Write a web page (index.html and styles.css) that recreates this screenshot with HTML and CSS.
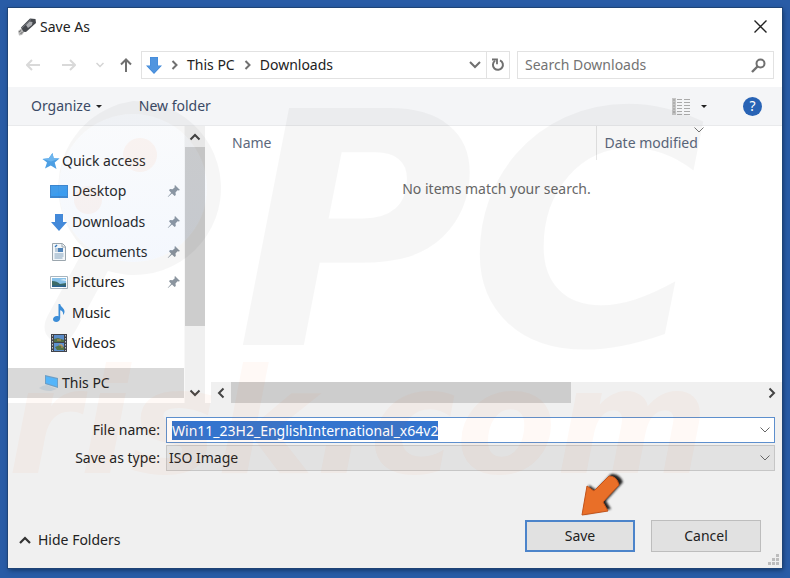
FILE: index.html
```html
<!DOCTYPE html>
<html lang="en">
<head>
<meta charset="utf-8">
<title>Save As</title>
<link rel="stylesheet" href="styles.css">
</head>
<body>
<svg class="symbols" aria-hidden="true">
  <symbol id="pin" viewBox="0 0 14 14"><path d="M8 1l5 5-1.500.500-1-.200L8.500 8.500l.300 2.500-1.200 1L5 9.500 1 13l-.300-.300L4.200 8.700 2 6.300l1-1.200 2.600.200L7.800 3.300 7.500 2z" fill="#8b959f"/></symbol>
  <symbol id="down" viewBox="0 0 16 17"><path d="M4 0h8v8.500h4L8 17 0 8.500h4z" fill="#3f87d8"/><path d="M4.500.500h7V9h3.300L8 16 1.200 9h3.300z" fill="#5095df"/></symbol>
  <symbol id="chev-down" viewBox="0 0 12 12"><path d="M1.500 3.500L6 8l4.500-4.500" fill="none" stroke="currentColor"/></symbol>
</svg>
<main class="window" aria-label="Save As">
  <header class="title">
    <svg class="usb" viewBox="0 0 20 18"><path d="M1 13l4-3 3 3-3 4-3 .500z" fill="#b8b8b8"/><path d="M2 14l2-1.500M3.500 16l2-2" stroke="#666"/><path d="M4 9.500L13 .500 18.500 1l.500 4-10 9-2.500-.200z" fill="#45484d"/><path d="M9 7l3.500-3.500 3 .500-.500 3L11 10z" fill="#aaacb0"/><path d="M5 10l9-8.500" stroke="#777b82"/></svg>
    <h1>Save As</h1>
    <button class="close" aria-label="Close"><svg viewBox="0 0 13 13"><path d="M.500.500l12 12m0-12l-12 12" stroke="#222" stroke-width="1.400"/></svg></button>
  </header>

  <div class="location">
    <div class="history">
      <button class="back" aria-label="Back" disabled><svg viewBox="0 0 14 12"><path d="M6 1L1 6l5 5M1 6h13" fill="none" stroke="#d9d9d9" stroke-width="2"/></svg></button>
      <button class="forward" aria-label="Forward" disabled><svg viewBox="0 0 14 12"><path d="M8 1l5 5-5 5M13 6H0" fill="none" stroke="#d9d9d9" stroke-width="2"/></svg></button>
      <button class="recent" aria-label="Recent locations" disabled><svg viewBox="0 0 8 6"><path d="M.500 1L4 4.500 7.500 1" fill="none" stroke="#d4d4d4" stroke-width="1.500"/></svg></button>
      <button class="up" aria-label="Up"><svg viewBox="0 0 12 14"><path d="M1 6.500L6 1.500l5 5M6 2v12" fill="none" stroke="#707070" stroke-width="2"/></svg></button>
    </div>
    <nav class="address" aria-label="Address">
      <svg class="folder"><use href="#down"/></svg>
      <svg class="sep" viewBox="0 0 7 10"><path d="M1.500 1l4 4-4 4" fill="none" stroke="#707070" stroke-width="2"/></svg>
      <a href="#pc">This PC</a>
      <svg class="sep" viewBox="0 0 7 10"><path d="M1.500 1l4 4-4 4" fill="none" stroke="#707070" stroke-width="2"/></svg>
      <a href="#downloads">Downloads</a>
      <button class="previous" aria-label="Previous locations"><svg viewBox="0 0 12 8"><path d="M1 1l5 5 5-5" fill="none" stroke="#707070" stroke-width="2"/></svg></button>
      <button class="refresh" aria-label="Refresh"><svg viewBox="0 0 14 14"><path d="M9 2.300a5 5 0 1 1-5 .500" fill="none" stroke="#707070" stroke-width="2"/><path d="M1 1.500h5v4.700" fill="none" stroke="#707070" stroke-width="1.800"/></svg></button>
    </nav>
    <label class="search"><input type="search" placeholder="Search Downloads" aria-label="Search Downloads"><svg viewBox="0 0 15 15"><circle cx="9.500" cy="5.500" r="4" fill="none" stroke="#707070" stroke-width="2"/><path d="M6.500 8.500L1 14" stroke="#707070" stroke-width="2.400"/></svg></label>
  </div>

  <div class="toolbar">
    <button class="organize">Organize <span class="caret"></span></button>
    <button>New folder</button>
    <button class="view" aria-label="Change view"><svg viewBox="0 0 18 17"><path d="M0 0h4v17H0z" fill="#c6c6c6"/><path d="M1 2h2M1 5h2M1 8h2M1 11h2M1 14h2" stroke="#999"/><path d="M5 1.500h5m2 0h6M5 4.500h5m2 0h6M5 7.500h5m2 0h6M5 10.500h5m2 0h6M5 13.500h5m2 0h6M5 16.500h5m2 0h6" stroke="#aaa"/></svg><span class="caret"></span></button>
    <button class="help" aria-label="Help">?</button>
  </div>

  <section class="browser">
    <nav class="tree" aria-label="Folders">
      <ul>
        <li class="root"><svg viewBox="0 0 18 18"><path d="M10.500 1l1.200 5.200 5.800.300-4.800 4L14.500 17l-5.700-3.500L3 16.500l2-6L.500 7l6.300-.700z" fill="#4d9fe3"/><path d="M10.500 1l1.200 5.200 5.800.300-8.500 3L.500 7l6.300-.700z" fill="#6db5ee"/></svg><a href="#quick">Quick access</a></li>
        <li><svg viewBox="0 0 18 18"><path d="M0 3h18v13H0z" fill="#3b86cf"/><path d="M1 4h16v10H1z" fill="#419cea"/><path d="M1 14L17 6v8z" fill="#389cf0"/></svg><a href="#desktop">Desktop</a><svg class="pin"><use href="#pin"/></svg></li>
        <li><svg viewBox="0 0 18 18"><path d="M5 1h8v8h4l-8 9-8-9h4z" fill="#4389d9"/></svg><a href="#downloads">Downloads</a><svg class="pin"><use href="#pin"/></svg></li>
        <li><svg viewBox="0 0 18 18"><path d="M2.500.500h10l3 3v14h-13z" fill="#f2f6f9" stroke="#9ba6ae"/><path d="M12 1v3h3" fill="none" stroke="#9ba6ae"/><path d="M5 6h3M5 8h3M4.500 11h9M4.500 13h9M4.500 15h8" stroke="#84a3bd"/><path d="M8 5h5v4H8z" fill="#4f83b9"/><path d="M5 4l2-2" stroke="#347abe" stroke-width="1.500"/></svg><a href="#documents">Documents</a><svg class="pin"><use href="#pin"/></svg></li>
        <li><svg viewBox="0 0 18 18"><path d="M.500 3.500h17v12H.500z" fill="#fff" stroke="#a8b5be"/><path d="M2 5h14v9H2z" fill="#88c1e9"/><path d="M2 8q5 0 8 3l6-1v4H2z" fill="#3c6b68"/><path d="M2 12.500h14V14H2z" fill="#286292"/><path d="M10 7l4-1 2 1v1z" fill="#dbedf6"/></svg><a href="#pictures">Pictures</a><svg class="pin"><use href="#pin"/></svg></li>
        <li><svg viewBox="0 0 18 18"><path d="M8.500 0h1.700c.300 3 4.300 4 4.300 7.500 0 1.500-.600 2.800-1.500 3.500.600-3-.800-4-2.800-4.700V14c0 5-7.200 5-7.200 1.200 0-2.400 3-4 5.500-2.900z" fill="#3f93df"/></svg><a href="#music">Music</a></li>
        <li><svg viewBox="0 0 18 18"><path d="M1 0h16v18H1z" fill="#42454c"/><path d="M4 1h10v7H4zM4 9h10v8H4z" fill="#5e92d0"/><path d="M4 5l4-1 6 2v2H4zM5 13l5-2 4 2v3H7z" fill="#547448"/><path d="M7 6h4M9 11h3v3" stroke="#d39853" fill="none"/><path d="M2.500 1v16m13-16v16" stroke="#c6c9ce" stroke-dasharray="1.500 1.500"/></svg><a href="#videos">Videos</a></li>
      </ul>
      <div class="root selected"><svg viewBox="0 0 18 18"><path d="M-3 14q4-3 8-3l10 4-6 2q-8 0-12-3z" fill="#c3ccd3"/><path d="M3 1l13 3v10L3 10z" fill="#6d9fc6"/><path d="M4 2.500l11 2.500v7.500L4 9z" fill="#54b5fa"/></svg><a href="#pc">This PC</a></div>
    </nav>
    <div class="vbar">
      <button aria-label="Scroll up"><svg class="flip"><use href="#chev-down"/></svg></button>
      <div class="track"><div class="thumb"></div></div>
      <button aria-label="Scroll down"><svg><use href="#chev-down"/></svg></button>
    </div>
    <div class="files">
      <table>
        <thead><tr><th>Name</th><th class="date">Date modified<svg class="sort"><use href="#chev-down"/></svg></th></tr></thead>
        <tbody><tr><td colspan="2">No items match your search.</td></tr></tbody>
      </table>
      <div class="hbar">
        <button aria-label="Scroll left"><svg class="left"><use href="#chev-down"/></svg></button>
        <div class="track"><div class="thumb"></div></div>
        <button aria-label="Scroll right"><svg class="right"><use href="#chev-down"/></svg></button>
      </div>
    </div>
  </section>

  <form class="details">
    <label for="name">File name:</label>
    <div class="field"><input id="name" type="text" value="Win11_23H2_EnglishInternational_x64v2" spellcheck="false"><svg><use href="#chev-down"/></svg></div>
    <label for="type">Save as type:</label>
    <div class="field"><select id="type"><option>ISO Image</option></select><svg><use href="#chev-down"/></svg></div>
  </form>

  <footer>
    <button class="hide"><svg viewBox="0 0 12 8"><path d="M1 7l5-5 5 5" fill="none" stroke="#333" stroke-width="2.200"/></svg>Hide Folders</button>
    <div class="save-wrap">
      <button class="action save">Save</button>
      <svg class="pointer" viewBox="0 0 48 50" aria-hidden="true">
        <defs><filter id="soft" x="-20%" y="-20%" width="140%" height="140%"><feGaussianBlur stdDeviation="1"/></filter></defs>
        <path d="M4 43L9 14l7 5L31 3q8-1 12 8L26 30l5 8z" fill="#222" transform="translate(2 -1)" filter="url(#soft)"/>
        <path d="M4 43L9 14l7 5L31 4q8 0 10 9L25 30l5 9z" fill="#e96f28" stroke="#c3541b" stroke-linejoin="round"/>
      </svg>
    </div>
    <button class="action">Cancel</button>
    <svg class="grip" viewBox="0 0 11 11" aria-hidden="true"><path d="M8 0h3v3H8zM4 4h3v3H4zM8 4h3v3H8zM0 8h3v3H0zM4 8h3v3H4zM8 8h3v3H8z" fill="#bdbdbd"/></svg>
  </footer>
</main>

<svg class="watermark" viewBox="0 0 790 578" aria-hidden="true">
  <defs><linearGradient id="lens" x2="0" y2="1"><stop stop-color="#8fa8c8" stop-opacity=".05"/><stop offset="1" stop-color="#5d91e8" stop-opacity=".07"/></linearGradient></defs>
  <circle cx="133" cy="188" r="74" fill="url(#lens)"/>
  <path d="M133 101a87 87 0 1 1-25 170l-31 57q-12 23-27 11-10-9-2-24l36-66A87 87 0 0 1 133 101zm0 13a74 74 0 1 0 0 148 74 74 0 0 0 0-148z" class="grey" fill-rule="evenodd"/>
  <circle cx="140" cy="155" r="17" class="spot"/>
  <circle cx="88" cy="200" r="14" class="spot"/>
  <text x="236" y="345" class="grey big">P</text>
  <text x="468" y="345" class="grey big">C</text>
  <text x="8" y="473" class="orange small">risk.com</text>
</svg>
<script src="dialog.js"></script>
</body>
</html>
```
FILE: styles.css
```css
* { box-sizing: border-box; }
body {
  margin: 0;
  min-height: 100vh;
  padding: 8px 8px 10px;
  display: flex;
  background: #295ca6;
  font: 14px/20px "Noto Sans", "Open Sans", sans-serif;
  color: #222;
}
button, input, select { font: inherit; color: inherit; }
button { border: 0; padding: 0; background: none; display: flex; align-items: center; }
a { color: inherit; text-decoration: none; }
svg { display: block; flex: none; }
.symbols { position: absolute; width: 0; height: 0; }
.window {
  flex: 1;
  display: flex;
  flex-direction: column;
  background: #fff;
  box-shadow: 0 0 0 1px #1e4477, 1px 2px 5px #12335f;
}

.title { display: flex; align-items: center; gap: 3px; height: 37px; padding: 0 15px 0 9px; }
.title h1 { margin: 0; font-size: 14px; font-weight: 400; flex: 1; }
.usb { width: 20px; height: 18px; }
.close svg { width: 13px; height: 13px; }

.location { display: flex; padding: 6px 8px 8px 17px; height: 42px; }
.history { display: flex; align-items: center; width: 116px; padding-left: 1px; }
.back svg, .forward svg { width: 14px; height: 12px; }
.forward { margin-left: 22px; }
.recent { margin-left: 20px; }
.recent svg { width: 8px; height: 6px; }
.up { margin-left: 16px; }
.up svg { width: 12px; height: 14px; }
.address { flex: 1; display: flex; align-items: center; border: 1px solid #e2e2e2; padding-left: 4px; }
.folder { width: 16px; height: 17px; }
.sep { width: 7px; height: 10px; margin: 0 9px; }
.previous { margin-left: auto; padding-right: 5px; }
.previous svg { width: 12px; height: 8px; }
.refresh { align-self: stretch; width: 23px; justify-content: center; border-left: 1px solid #e2e2e2; }
.refresh svg { width: 14px; height: 14px; }
.search { width: 257px; margin-left: 7px; display: flex; align-items: center; border: 1px solid #e2e2e2; padding: 0 7px; }
.search input { flex: 1; min-width: 0; border: 0; padding: 0; outline: 0; background: none; }
.search input::placeholder { color: #737373; opacity: 1; }
.search svg { width: 15px; height: 15px; }

.toolbar { display: flex; align-items: center; height: 39px; padding: 0 20px 0 23px; background: #f4f5f7; border-bottom: 1px solid #e9eaec; color: #3b4a66; }
.organize { margin-right: 37px; gap: 5px; }
.caret { border: 3px solid transparent; border-top-color: #222; border-bottom: 0; }
.view { margin-left: auto; gap: 11px; }
.view svg { width: 18px; height: 17px; }
.help { margin-left: 36px; width: 19px; height: 19px; border-radius: 50%; background: #2863b5; color: #fff; justify-content: center; }

.browser { flex: 1; display: flex; min-height: 0; }
.tree { width: 176px; display: flex; flex-direction: column; padding: 20px 0 5px; }
.tree ul { flex: 1; display: grid; grid-auto-rows: 1fr; list-style: none; margin: 0 0 10px; padding: 0; }
.tree li, .selected { display: flex; align-items: center; gap: 4px; padding: 0 3px 0 42px; }
.tree .root { padding-left: 34px; gap: 2px; }
.tree svg { width: 18px; height: 18px; overflow: visible; }
.tree .pin { width: 14px; height: 14px; margin-left: auto; }
.tree .selected { height: 30px; background: #d9d9d9; }

.vbar, .hbar { display: flex; background: #f0f0f0; color: #444; }
.vbar { flex-direction: column; width: 21px; border-left: 1px solid #f8f8f8; }
.vbar button, .hbar button { width: 20px; height: 21px; justify-content: center; }
.vbar svg, .hbar svg { width: 12px; height: 12px; stroke-width: 2px; }
.track { flex: 1; }
.thumb { background: #cdcdcd; }
.vbar .thumb { height: 76%; }
.hbar .track { display: flex; }
.hbar .thumb { width: 64%; }
.flip { transform: rotate(180deg); }
.left { transform: rotate(90deg); }
.right { transform: rotate(-90deg); }

.files { flex: 1; display: flex; flex-direction: column; margin-left: 6px; }
.files table { width: 100%; border-collapse: collapse; margin-bottom: auto; }
.files th { height: 34px; padding: 0 0 0 21px; text-align: left; font-weight: 400; color: #5c687c; }
.files .date { position: relative; width: 186px; padding-left: 8px; border-left: 1px solid #e5e5e5; }
.sort { position: absolute; top: -2px; left: 96px; width: 12px; height: 12px; color: #777; }
.files td { height: 58px; padding: 0; text-align: center; color: #686868; }

.details { display: grid; grid-template-columns: 152px 1fr; gap: 2px 6px; padding: 14px 7px 0 0; background: #f0f0f0; }
.details label { text-align: right; align-self: center; }
.field { position: relative; display: flex; }
.field input, .field select { width: 100%; height: 26px; border: 1px solid #5d8fcd; border-radius: 0; padding: 0 24px 0 5px; outline: 0; background: #fff; }
.field select { appearance: none; padding-left: 2px; border-color: #c6c6c6; background: #e2e2e2; }
.field svg { position: absolute; right: 4px; top: 7px; width: 12px; height: 12px; color: #666; pointer-events: none; }
.field input::selection { background: #3474ce; color: #fff; }

footer { position: relative; display: flex; align-items: center; gap: 16px; padding: 49px 21px 16px 11px; background: #f0f0f0; }
.hide { gap: 7px; margin-right: auto; padding-top: 8px; }
.hide svg { width: 12px; height: 8px; }
.save-wrap { position: relative; }
.action { width: 110px; height: 32px; justify-content: center; background: #e1e1e1; border: 1px solid #bdbdbd; }
.save { border: 2px solid #4c84ca; }
.pointer { position: absolute; left: 53px; top: -48px; width: 48px; height: 50px; }
.grip { position: absolute; right: 3px; bottom: 3px; width: 11px; height: 11px; }

.watermark { position: absolute; inset: 0; width: 100%; height: 100%; pointer-events: none; }
.watermark text { font-family: "DejaVu Sans", sans-serif; font-weight: 700; font-style: italic; user-select: none; }
.grey { fill: #000; fill-opacity: .035; }
.orange { fill: #ff5a14; fill-opacity: .04; }
.spot { fill: #ff5a14; fill-opacity: .05; }
.big { font-size: 325px; }
.small { font-size: 146px; }
```
FILE: dialog.js
```js
const fileName = document.getElementById("name");
fileName.focus();
fileName.select();
```
